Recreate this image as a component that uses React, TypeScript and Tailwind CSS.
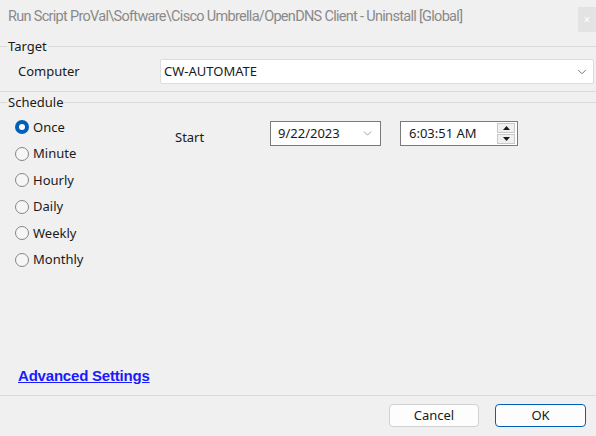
import { ChevronDown } from "lucide-react"

const options = ["Once", "Minute", "Hourly", "Daily", "Weekly", "Monthly"]

function GroupHeader({ label }: { label: string }) {
  return (
    <div className="flex items-center h-[16px]">
      <div className="w-[7px] h-px bg-[#dadada]" />
      <span className="px-px text-[13px] leading-none text-[#1a1a1a]">{label}</span>
      <div className="flex-1 h-px bg-[#dadada]" />
    </div>
  )
}

function Radio({ label, checked }: { label: string; checked?: boolean }) {
  return (
    <div className="flex items-center h-[26.5px]">
      {checked ? (
        <div className="w-[14px] h-[14px] rounded-full bg-[#005fb8] flex items-center justify-center">
          <div className="w-[6px] h-[6px] rounded-full bg-white" />
        </div>
      ) : (
        <div className="w-[14px] h-[14px] rounded-full border border-[#858585] bg-[#f6f6f6]" />
      )}
      <span className="ml-[4px] text-[13px] text-[#1a1a1a]">{label}</span>
    </div>
  )
}

export default function App() {
  return (
    <div className="w-[596px] h-[436px] bg-[#f0f0f0] flex flex-col overflow-hidden font-['Segoe_UI','Noto_Sans',sans-serif]">
      {/* title bar */}
      <div className="h-[36px] flex items-start shrink-0">
        <div className="pl-[8px] pt-[7px] text-[14.5px] leading-[20px] tracking-[-0.7px] text-[#8a8a8a] flex-1 whitespace-nowrap font-['Roboto',sans-serif]">
          Run Script ProVal\Software\Cisco Umbrella/OpenDNS Client - Uninstall [Global]
        </div>
        <div className="mt-[7px] w-[18px] h-[25px] bg-[#e3e3e3] flex items-center justify-center text-white text-[12px]">
          ×
        </div>
      </div>

      {/* target */}
      <div className="mt-[2px]">
        <GroupHeader label="Target" />
        <div className="flex items-center mt-[5px] h-[25px]">
          <span className="pl-[18px] w-[160px] text-[13px] text-[#1a1a1a]">Computer</span>
          <div className="flex-1 mr-[2px] h-[25px] bg-white border border-[#dcdcdc] rounded-[2px] flex items-center pl-[3px] pr-[4px]">
            <span className="flex-1 text-[13px] text-[#1a1a1a]">CW-AUTOMATE</span>
            <ChevronDown className="w-[14px] h-[14px] text-[#606060]" strokeWidth={1.5} />
          </div>
        </div>
        <div className="mt-[7px] h-px bg-[#dadada]" />
      </div>

      {/* schedule */}
      <div className="mt-[2px]">
        <GroupHeader label="Schedule" />
        <div className="flex mt-[4px]">
          <div className="pl-[15px] w-[160px] flex flex-col">
            {options.map((o, i) => (
              <Radio key={o} label={o} checked={i === 0} />
            ))}
          </div>
          <div className="flex items-start pt-[7px]">
            <span className="pl-[15px] w-[110px] pt-[7px] text-[13px] text-[#1a1a1a]">Start</span>
            <div className="w-[111px] h-[25px] bg-white border border-[#7a7a7a] flex items-center pl-[7px] pr-[6px]">
              <span className="flex-1 text-[13px] text-[#1a1a1a]">9/22/2023</span>
              <ChevronDown className="w-[13px] h-[13px] text-[#8a8a8a]" strokeWidth={1.5} />
            </div>
            <div className="ml-[19px] w-[118px] h-[25px] bg-white border border-[#7a7a7a] flex items-center pl-[8px] pr-[2px]">
              <span className="flex-1 text-[13px] text-[#1a1a1a]">6:03:51 AM</span>
              <div className="w-[18px] h-[21px] flex flex-col gap-px">
                <div className="flex-1 bg-[#f0f0f0] border border-[#c8c8c8] flex items-center justify-center">
                  <svg width="7" height="4" viewBox="0 0 7 4"><path d="M0 4L3.5 0L7 4Z" fill="#1a1a1a" /></svg>
                </div>
                <div className="flex-1 bg-[#f0f0f0] border border-[#c8c8c8] flex items-center justify-center">
                  <svg width="7" height="4" viewBox="0 0 7 4"><path d="M0 0L3.5 4L7 0Z" fill="#1a1a1a" /></svg>
                </div>
              </div>
            </div>
          </div>
        </div>
      </div>

      <div className="flex-1" />

      <div className="pl-[18px] pb-[8px]">
        <a className="text-[15px] font-bold underline text-[#1a1aff] font-['Liberation_Sans',sans-serif] tracking-[-0.2px]">
          Advanced Settings
        </a>
      </div>
      <div className="h-px bg-[#dadada]" />
      <div className="h-[40px] flex items-start justify-end pt-[8px] pr-[10px] gap-[16px]">
        <button className="w-[90px] h-[23px] bg-[#fdfdfd] border border-[#d0d0d0] rounded-[4px] text-[13px] text-[#1a1a1a]">
          Cancel
        </button>
        <button className="w-[91px] h-[23px] bg-[#fdfdfd] border border-[#005fb8] rounded-[4px] text-[13px] text-[#1a1a1a]">
          OK
        </button>
      </div>
    </div>
  )
}
